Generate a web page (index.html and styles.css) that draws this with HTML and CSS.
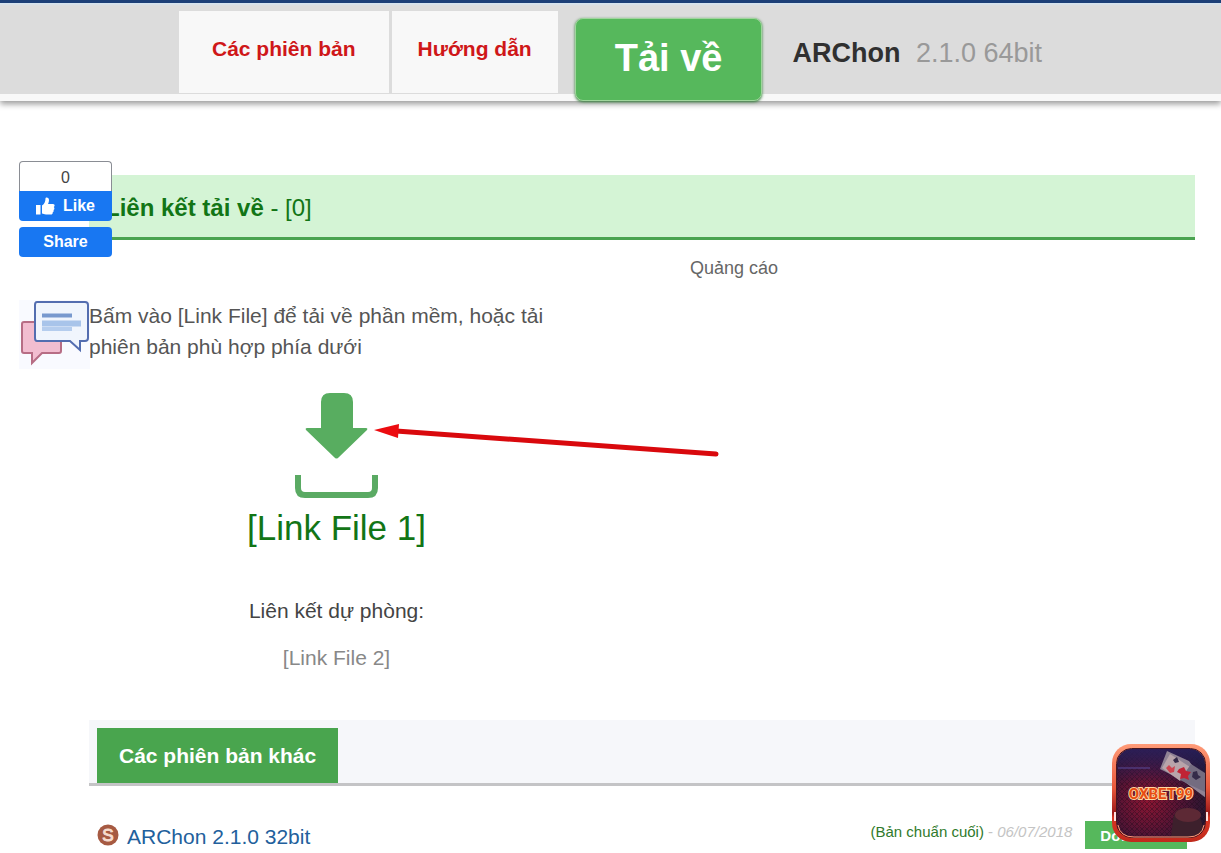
FILE: index.html
```html
<!DOCTYPE html>
<html lang="vi">
<head>
<meta charset="utf-8">
<title>ARChon 2.1.0 64bit</title>
<link rel="stylesheet" href="styles.css">
</head>
<body>
<header class="topbar">
  <nav class="tabs">
    <a class="tab tab-wide" href="#versions">Các phiên bản</a>
    <a class="tab" href="#guide">Hướng dẫn</a>
  </nav>
  <button class="download-main" type="button">Tải về</button>
  <h1 class="product">ARChon <span class="product-version">2.1.0 64bit</span></h1>
</header>

<main class="content">
  <h2 class="section-title">Liên kết tải về <span class="section-count">- [0]</span></h2>
  <div class="columns">
    <section class="links">
      <p class="intro">Bấm vào [Link File] để tải về phần mềm, hoặc tải phiên bản phù hợp phía dưới</p>
      <div class="link-list">
        <a class="file-main" href="#file1">
          <svg class="download-icon" width="83" height="105" viewBox="0 0 83 105" aria-hidden="true">
            <path fill="#58ad60" d="M26 9Q26 0 35 0H49Q58 0 58 9V35H71Q73 35 72 37L44 64Q41.500 67 39 64L11 37Q10 35 12 35H26Z"/>
            <path fill="none" stroke="#5aaa63" stroke-width="6" d="M3 82V95Q3 102 10 102H73Q80 102 80 95V82"/>
          </svg>
          <span>[Link File 1]</span>
        </a>
        <p class="backup-label">Liên kết dự phòng:</p>
        <a class="file-backup" href="#file2">[Link File 2]</a>
      </div>
      <svg class="pointer" width="346" height="40" viewBox="0 0 346 40" aria-hidden="true">
        <path d="M22 11L342 34" fill="none" stroke="#d9090d" stroke-width="5" stroke-linecap="round"/>
        <path d="M0 10L25 4L24 18Z" fill="#ec0c10"/>
      </svg>
    </section>
    <aside class="ad-label">Quảng cáo</aside>
  </div>

  <section id="versions">
    <div class="versions-bar"><h2 class="versions-title">Các phiên bản khác</h2></div>
    <div class="version-row">
      <svg class="version-icon" width="22" height="22" viewBox="0 0 22 22" aria-hidden="true">
        <circle cx="11" cy="11" r="10.500" fill="#a65a42"/>
        <text class="version-icon-letter" x="11" y="17" text-anchor="middle">S</text>
      </svg>
      <a class="version-name" href="#v32">ARChon 2.1.0 32bit</a>
      <span class="version-meta">(Bản chuẩn cuối) <span class="version-date">- <em>06/07/2018</em></span></span>
      <button class="version-download" type="button">Download</button>
    </div>
  </section>
</main>

<div class="social">
  <span class="like-count">0</span>
  <button class="like" type="button">
    <svg width="19" height="18" viewBox="0 0 19 18" aria-hidden="true">
      <path fill="#fff" d="M0 8H4.500V17.500H0ZM6 8.500C8.500 7 9.500 4 9.500 1.500C9.500 -.2 13 .2 13 3C13 4.500 12.500 6 12 7H17C19 7 19 9.500 17.800 10C18.800 11 18.500 12.500 17.500 13C18 14 17.500 15 16.700 15.300C17 16.500 16 17.500 15 17.500H10C8 17.500 7.500 16.500 6 16.500Z"/>
    </svg>
    Like
  </button>
  <button class="share" type="button">Share</button>
</div>

<button class="comments" type="button" aria-label="Comments">
  <svg width="71" height="69" viewBox="0 0 71 69" aria-hidden="true">
    <path d="M5 22H40Q42 22 42 24V51Q42 53 40 53H23L13 63V53H5Q3 53 3 51V24Q3 22 5 22Z" fill="#f2bdd0" stroke="#b76d85" stroke-width="2"/>
    <path d="M18 2H66Q69 2 69 5V38Q69 41 66 41H61V50L51 41H18Q16 41 16 38V5Q16 2 18 2Z" fill="#f0f5fd" stroke="#536db0" stroke-width="2"/>
    <path d="M23 15.500H53" stroke="#7899ce" stroke-width="4"/>
    <path d="M23 23.500H62" stroke="#a8c4ea" stroke-width="6"/>
    <path d="M23 29H53" stroke="#b5cdee" stroke-width="4"/>
  </svg>
</button>

<a class="promo" href="#promo" aria-label="OXBET99">
  <svg width="98" height="98" viewBox="0 0 98 98">
    <defs>
      <linearGradient id="frame" x1="0" y1="0" x2="0" y2="1">
        <stop offset="0" stop-color="#ff9b78"/><stop offset=".45" stop-color="#e8583c"/><stop offset=".7" stop-color="#9e1a1a"/><stop offset=".75" stop-color="#d93522"/><stop offset="1" stop-color="#c02a1c"/>
      </linearGradient>
      <radialGradient id="glow" cx=".35" cy=".6" r=".75">
        <stop offset="0" stop-color="#8d1532"/><stop offset=".5" stop-color="#521434"/><stop offset="1" stop-color="#1c1730"/>
      </radialGradient>
      <linearGradient id="sky" x1="0" y1="0" x2="0" y2="1">
        <stop offset="0" stop-color="#2b2060" stop-opacity=".8"/><stop offset=".4" stop-color="#2b2060" stop-opacity="0"/>
      </linearGradient>
      <pattern id="mesh" width="5" height="5" patternUnits="userSpaceOnUse">
        <path d="M0 0L5 5M5 0L0 5" stroke="#1a0a18" stroke-width="1" opacity=".4"/>
      </pattern>
      <clipPath id="inside"><rect x="5" y="5" width="88" height="88" rx="15"/></clipPath>
    </defs>
    <rect width="98" height="98" rx="19" fill="url(#frame)"/>
    <g clip-path="url(#inside)">
      <rect x="5" y="5" width="88" height="88" fill="url(#glow)"/>
      <rect x="5" y="5" width="88" height="88" fill="url(#mesh)"/>
      <rect x="5" y="5" width="88" height="88" fill="url(#sky)"/>
      <path d="M55 7L77 17L94 40V54L70 36L48 25Z" fill="#8f8294"/>
      <path d="M50 24L58 10L78 23L68 37Z" fill="#b8a4aa"/>
      <path d="M68 36L79 20L93 29V48Z" fill="#746c80"/>
      <path d="M67 25l5-2 2 4 5 1-3 4 1 4-5-2-4 1 1-5-4-2z" fill="#c02335"/>
      <path d="M54 24l3-3 3 3 3-2-1 6-4 1z" fill="#cf4450"/>
      <path d="M61 16l4-3 2 5-4 1zM81 28l4-1 1 4 3 2-5 3-4-3z" fill="#352b49"/>
      <path d="M61 76Q62 63 75 64Q90 67 93 93H59Z" fill="#3d202c"/>
      <ellipse cx="76" cy="71" rx="13" ry="7" fill="#5d2935"/>
      <path d="M6 24H38" stroke="#5a4a9a"/>
    </g>
    <rect x="4.500" y="4.500" width="89" height="89" rx="15" fill="none" stroke="#45151f"/>
    <path d="M6 81Q8 93 22 93H76Q90 93 92 81" fill="none" stroke="#ff9a78"/>
    <path d="M3 68V77M95 68V77" stroke="#ffe0e0" stroke-width="2"/>
    <text class="promo-text" x="49" y="55" text-anchor="middle">OXBET99</text>
  </svg>
</a>
</body>
</html>
```

FILE: styles.css
```css
* { box-sizing: border-box; }
body {
  margin: 0;
  position: relative;
  background: #fff;
  color: #444;
  font: 21px/24px "Liberation Sans", Arial, sans-serif;
  overflow: hidden;
}
h1, h2, p { margin: 0; }
a { text-decoration: none; }
button { font-family: inherit; border: 0; padding: 0; cursor: pointer; }
svg { display: block; }

.topbar {
  display: flex;
  align-items: flex-start;
  padding-left: 179px;
  background: linear-gradient(#d4e4f2, #dcdcdc 3px);
  border-top: 3px solid #1c3f77;
  border-bottom: 7px solid #f8f8f8;
  box-shadow: 0 3px 6px rgba(0, 0, 0, .4);
}
.tabs { display: flex; gap: 3px; padding: 8px 0 1px; }
.tab {
  padding: 26px 26px 32px;
  background: #f8f8f8;
  color: #cf1719;
  font-weight: bold;
}
.tab-wide { padding-left: 33px; padding-right: 33px; }
.download-main {
  margin: 15px 0 -8px 17px;
  padding: 0 39px 3px;
  height: 83px;
  border: 1px solid #9fd69c;
  border-radius: 8px;
  background: #56b85c;
  box-shadow: 0 1px 3px #2f7a35;
  color: #fff;
  font-size: 38px;
  font-weight: bold;
}
.product { padding: 34px 0 0 30px; font-size: 27px; line-height: 32px; color: #303030; }
.product-version { margin-left: 8px; font-weight: normal; color: #999; }

.content { margin: 74px 26px 0 89px; }
.section-title {
  padding: 16px 16px 13px;
  border-bottom: 3px solid #4aa350;
  background: #d4f4d5;
  color: #127516;
  font-size: 24px;
  line-height: 33px;
}
.section-count { font-weight: normal; }
.columns { display: grid; grid-template-columns: 495px 1fr; }
.links { position: relative; padding-top: 60px; }
.intro { padding-right: 32px; line-height: 31px; color: #555; }
.link-list { display: flex; flex-direction: column; align-items: center; padding-top: 31px; }
.file-main {
  display: flex;
  flex-direction: column;
  align-items: center;
  gap: 10px;
  color: #127516;
  font-size: 35px;
  line-height: 40px;
}
.backup-label { margin-top: 51px; }
.file-backup { margin-top: 23px; color: #888; }
.pointer { position: absolute; left: 285px; top: 180px; }
.ad-label { padding: 16px 0 0 106px; font-size: 18px; color: #666; }

.versions-bar { display: flex; margin-top: 50px; padding: 8px 8px 0; background: #f6f7fa; border-bottom: 3px solid #c4c4c6; }
.versions-title { padding: 16px 22px 15px; background: #49a54e; color: #fff; font-size: 21px; line-height: 24px; }
.version-row { display: flex; align-items: center; padding: 34px 8px 4px; }
.version-name { margin-left: 8px; padding-top: 4px; color: #22609c; }
.version-icon-letter { font-size: 17px; fill: #f6ddd0; stroke: #f6ddd0; }
.version-meta { margin: 0 13px 6px auto; font-size: 15px; color: #2f7a2c; }
.version-date { color: #c4c4c4; }
.version-download { padding: 0 15px; height: 28px; background: #56b85c; color: #fff; font-size: 15px; font-weight: bold; }

.social { position: absolute; left: 19px; top: 161px; width: 93px; display: flex; flex-direction: column; font-size: 16px; }
.like-count {
  height: 30px;
  border: 1px solid #8a8d94;
  border-bottom: 0;
  border-radius: 4px 4px 0 0;
  background: #fff;
  line-height: 32px;
  text-align: center;
}
.like, .share { height: 30px; background: #1877f2; color: #fff; font-size: 16px; font-weight: bold; }
.like { display: flex; align-items: center; justify-content: center; gap: 8px; border-radius: 0 0 4px 4px; }
.share { margin-top: 6px; border-radius: 4px; }
.comments { position: absolute; left: 19px; top: 300px; background: #f9faff; }
.promo { position: absolute; right: 11px; top: 744px; }
.promo-text {
  font: bold 15px Roboto, "Liberation Sans", sans-serif;
  fill: #e84c12;
  stroke: #ffd9a0;
  stroke-width: 2px;
  paint-order: stroke;
}
```
